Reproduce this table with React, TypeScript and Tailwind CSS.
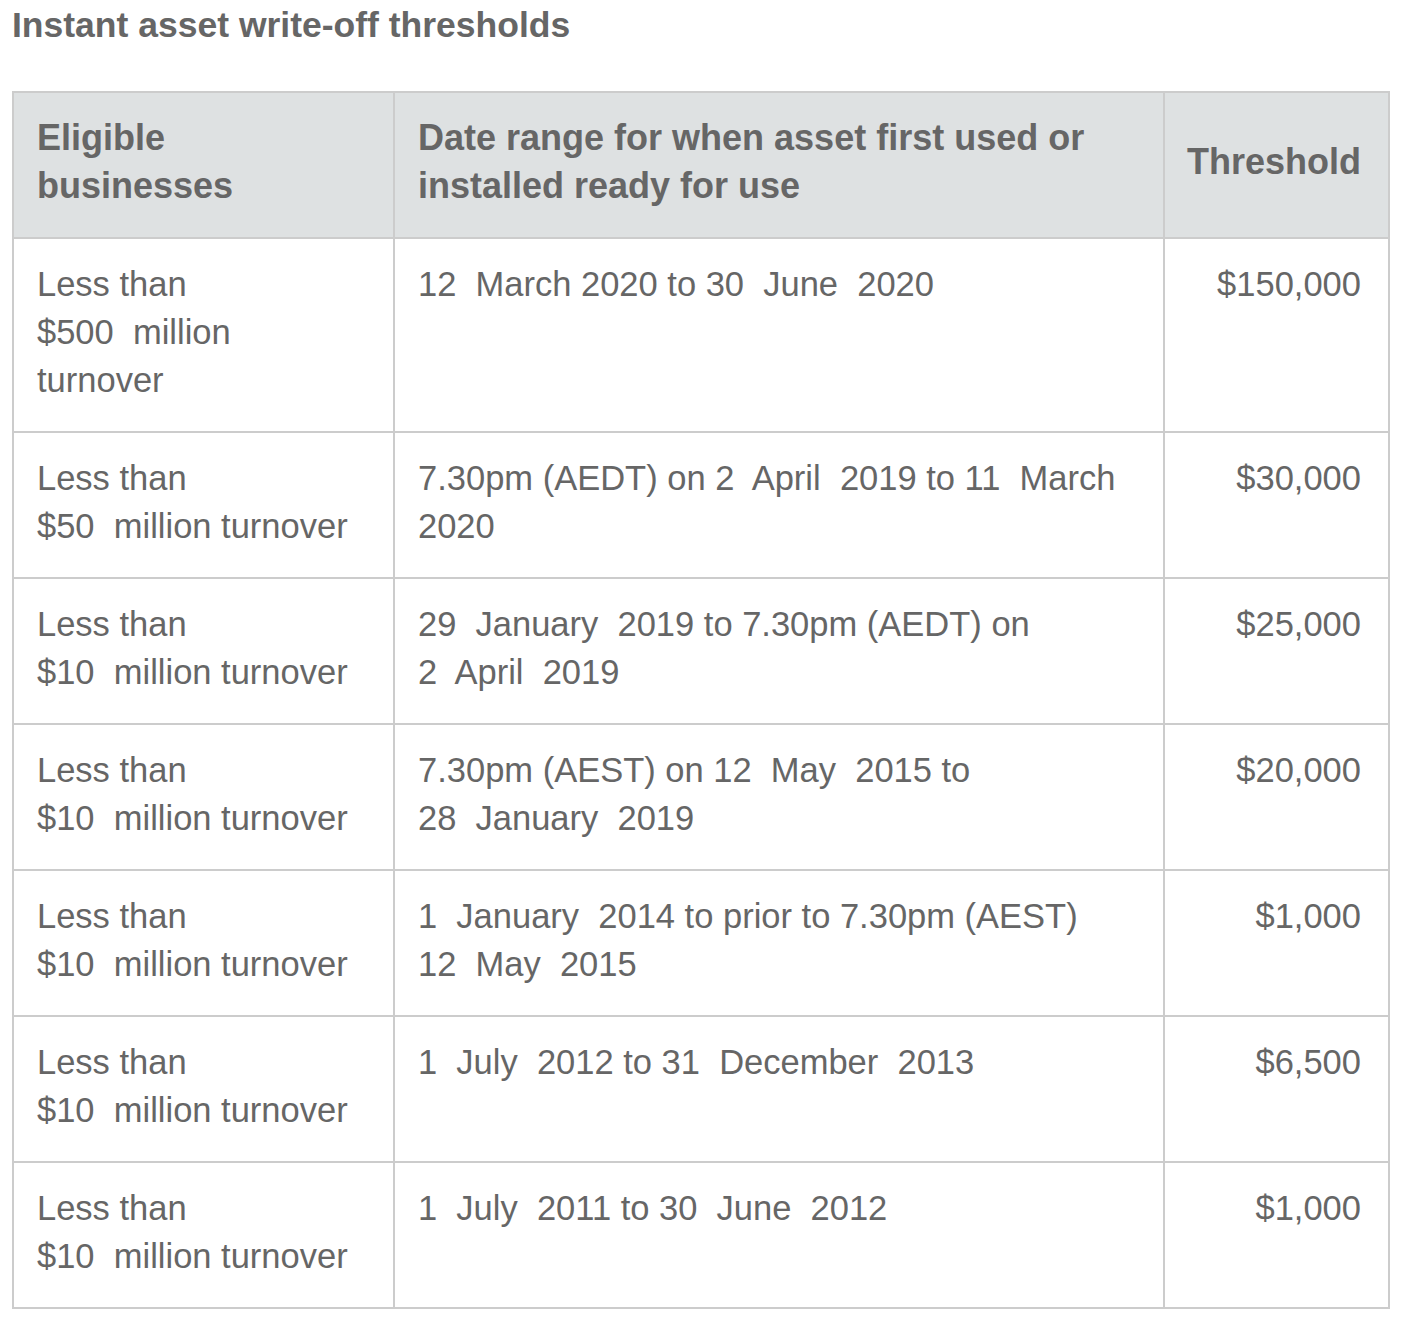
import React from 'react';

const S = '\u00a0 ';

interface Row {
  business: React.ReactNode;
  dates: React.ReactNode;
  threshold: string;
}

const rows: Row[] = [
  {
    business: (<>Less than<br />$500{S}million<br />turnover</>),
    dates: <>12{S}March 2020 to 30{S}June{S}2020</>,
    threshold: '$150,000',
  },
  {
    business: (<>Less than<br />$50{S}million turnover</>),
    dates: (<>7.30pm (AEDT) on 2{S}April{S}2019 to 11{S}March<br />2020</>),
    threshold: '$30,000',
  },
  {
    business: (<>Less than<br />$10{S}million turnover</>),
    dates: (<>29{S}January{S}2019 to 7.30pm (AEDT) on<br />2{S}April{S}2019</>),
    threshold: '$25,000',
  },
  {
    business: (<>Less than<br />$10{S}million turnover</>),
    dates: (<>7.30pm (AEST) on 12{S}May{S}2015 to<br />28{S}January{S}2019</>),
    threshold: '$20,000',
  },
  {
    business: (<>Less than<br />$10{S}million turnover</>),
    dates: (<>1{S}January{S}2014 to prior to 7.30pm (AEST)<br />12{S}May{S}2015</>),
    threshold: '$1,000',
  },
  {
    business: (<>Less than<br />$10{S}million turnover</>),
    dates: <>1{S}July{S}2012 to 31{S}December{S}2013</>,
    threshold: '$6,500',
  },
  {
    business: (<>Less than<br />$10{S}million turnover</>),
    dates: <>1{S}July{S}2011 to 30{S}June{S}2012</>,
    threshold: '$1,000',
  },
];

export default function App() {
  return (
    <div className="min-h-[1320px] bg-white text-[#666666] font-['Liberation_Sans',Arial,sans-serif]">
      <h2 className="pt-[4px] pl-[12px] text-[35.5px] leading-[43px] font-bold">
        Instant asset write-off thresholds
      </h2>

      <table className="mt-[44px] ml-[12px] w-[1376px] table-fixed border-collapse border-2 border-[#cccccc] text-[34.5px] leading-[48px]">
        <colgroup>
          <col className="w-[381px]" />
          <col className="w-[770px]" />
          <col className="w-[225px]" />
        </colgroup>
        <thead>
          <tr className="bg-[#dee1e2] font-bold text-[36px]">
            <th className="border-2 border-[#cccccc] pl-[23px] pr-[24px] pt-[21px] pb-[27px] text-left align-top">
              Eligible<br />businesses
            </th>
            <th className="border-2 border-[#cccccc] pl-[23px] pr-[24px] pt-[21px] pb-[27px] text-left align-top whitespace-nowrap">
              Date range for when asset first used or<br />installed ready for use
            </th>
            <th className="border-2 border-[#cccccc] pl-[12px] pr-[27px] pt-[21px] pb-[27px] text-right align-middle">
              Threshold
            </th>
          </tr>
        </thead>
        <tbody>
          {rows.map((row, i) => (
            <tr key={i}>
              <td className="border-2 border-[#cccccc] pl-[23px] pr-[20px] pt-[21px] pb-[27px] align-top whitespace-nowrap">
                {row.business}
              </td>
              <td className="border-2 border-[#cccccc] pl-[23px] pr-[24px] pt-[21px] pb-[27px] align-top whitespace-nowrap">
                {row.dates}
              </td>
              <td className="border-2 border-[#cccccc] pl-[24px] pr-[27px] pt-[21px] pb-[27px] text-right align-top">
                {row.threshold}
              </td>
            </tr>
          ))}
        </tbody>
      </table>
    </div>
  );
}
